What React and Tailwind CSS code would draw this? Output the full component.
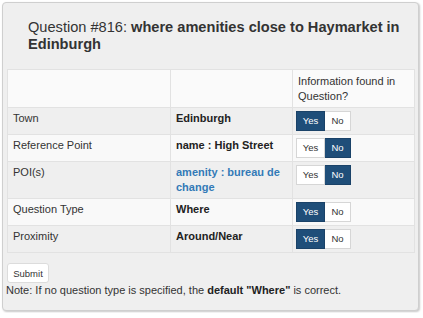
import React from 'react';

const rows = [
  { label: 'Town', value: 'Edinburgh', yes: true, bg: 'bg-[#efefef]' },
  { label: 'Reference Point', value: 'name : High Street', yes: false, bg: 'bg-[#f9f9f9]' },
  { label: 'POI(s)', value: 'amenity : bureau de change', yes: false, link: true, bg: 'bg-[#efefef]' },
  { label: 'Question Type', value: 'Where', yes: true, bg: 'bg-[#f9f9f9]' },
  { label: 'Proximity', value: 'Around/Near', yes: true, bg: 'bg-[#efefef]' },
];

function YesNo({ yes }) {
  const on = 'bg-[#1f4e79] text-white border-[#1a4268]';
  const off = 'bg-white text-[#333] border-[#d6d6d6]';
  return (
    <div className="ml-[-2px] flex h-[20px] text-[9.5px] leading-none">
      <span className={`flex w-[29px] items-center justify-center border ${yes ? on : off}`}>Yes</span>
      <span className={`flex w-[26px] items-center justify-center border border-l-0 ${yes ? off : on}`}>No</span>
    </div>
  );
}

export default function App() {
  return (
    <div className="p-[2px] font-['Liberation_Sans',Arial,sans-serif] text-[11px] leading-[15px] text-[#333]">
      <div className="w-[417px] rounded-[4px] border border-[#cfcfcf] bg-[#efefef] pb-[12px] shadow-[1px_1px_2px_rgba(0,0,0,0.22)]">
        <h3 className="pl-[25px] pr-[6px] pt-[16px] text-[14.6px] leading-[17px]">
          Question #816: <b>where amenities close to Haymarket in Edinburgh</b>
        </h3>

        <div className="mt-[16px] px-[4px]">
          <table className="w-[407px] table-fixed border-collapse border border-[#e2e2e2]">
            <colgroup>
              <col className="w-[163px]" />
              <col className="w-[122px]" />
              <col className="w-[122px]" />
            </colgroup>
            <thead>
              <tr className="bg-[#fafafa]">
                <th className="border border-[#e2e2e2] px-[5px] pb-[3px] pt-[4px]"></th>
                <th className="border border-[#e2e2e2] px-[5px] pb-[3px] pt-[4px]"></th>
                <th className="border border-[#e2e2e2] px-[5px] pb-[3px] pt-[4px] text-left align-top font-normal">
                  Information found in Question?
                </th>
              </tr>
            </thead>
            <tbody>
              {rows.map((r) => (
                <tr key={r.label} className={r.bg}>
                  <td className="border border-[#e2e2e2] px-[5px] pb-[3px] pt-[3px] align-top">{r.label}</td>
                  <td
                    className={`border border-[#e2e2e2] px-[5px] pb-[3px] pt-[3px] align-top font-bold ${
                      r.link ? 'text-[#337ab7]' : 'text-[#222]'
                    }`}
                  >
                    {r.value}
                  </td>
                  <td className="border border-[#e2e2e2] px-[5px] pb-[3px] pt-[3px] align-top">
                    <YesNo yes={r.yes} />
                  </td>
                </tr>
              ))}
            </tbody>
          </table>

          <button className="mt-[10px] flex h-[20px] w-[42px] items-center justify-center rounded-[3px] border border-[#dcdcdc] bg-white text-[9.5px] text-[#333]">
            Submit
          </button>
        </div>

        <p className="pl-[3px]">
          Note: If no question type is specified, the <b className="text-[#222]">default "Where"</b> is correct.
        </p>
      </div>
    </div>
  );
}
